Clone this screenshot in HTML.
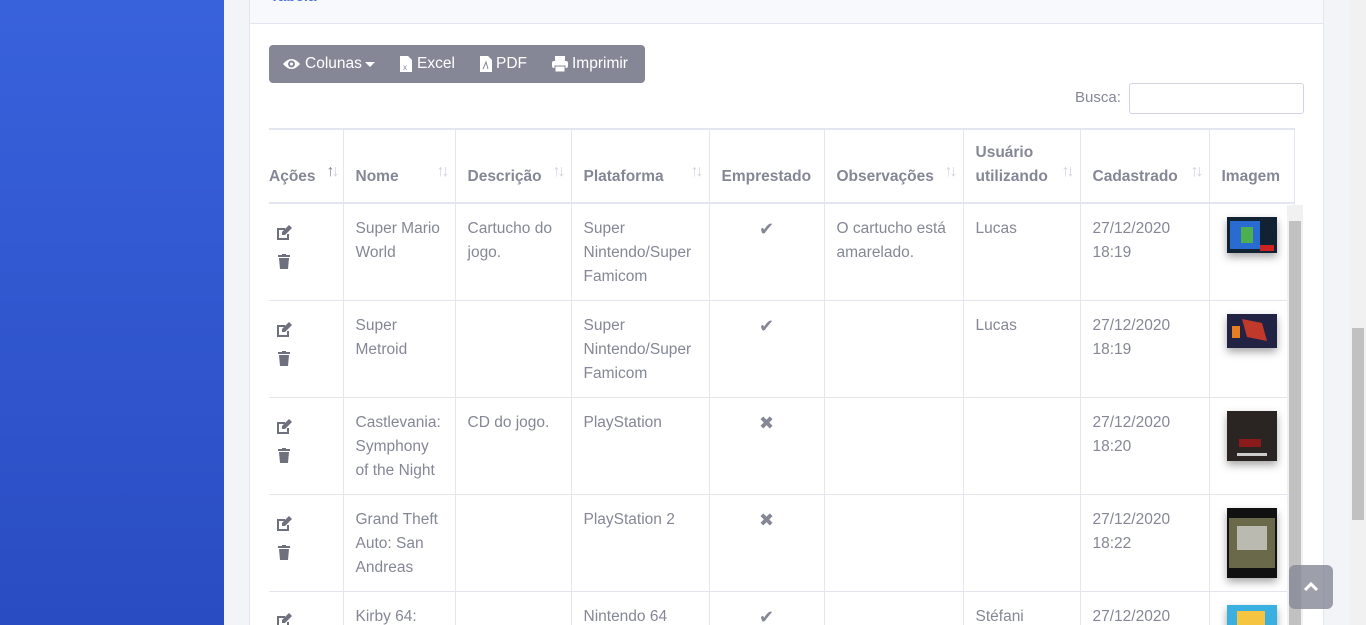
<!DOCTYPE html>
<html><head><meta charset="utf-8"><style>
*{box-sizing:border-box;margin:0;padding:0}
html,body{width:1366px;height:625px;overflow:hidden}
body{background:#f3f4f8;font-family:"Liberation Sans",sans-serif;color:#858796;position:relative}
.side{position:absolute;left:0;top:0;width:224px;height:625px;background:linear-gradient(180deg,#3862dc,#2a4cc2)}
.card{position:absolute;left:249px;top:-10px;width:1075px;height:635px;background:#fff;border-left:1px solid #e3e6f0;border-right:1px solid #e3e6f0}
.chead{position:absolute;left:0;top:0;width:100%;height:34px;background:#f8f9fc;border-bottom:1px solid #e3e6f0}
.chead span{position:absolute;left:20px;top:-2px;color:#4e73df;font-weight:bold;font-size:15px}
.btns{position:absolute;left:269px;top:45px;width:376px;height:38px;background:#858796;border-radius:4px;color:#fff;font-size:15.5px}
.btns span{position:absolute;top:10px}
.busca{position:absolute;left:1075px;top:89px;font-size:15px}
.inp{position:absolute;left:1129px;top:83px;width:175px;height:31px;border:1px solid #d1d3e2;border-radius:3px;background:#fff}
.wrap{position:absolute;left:269px;top:128px;width:1040px;height:497px;overflow:hidden}
table{border-collapse:collapse;table-layout:fixed;font-size:15.5px}
th,td{border:1px solid #e3e6f0;text-align:left}
th{height:74px;vertical-align:bottom;padding:0 12px 13px;font-weight:bold;line-height:24px;border-top:2px solid #e3e6f0;border-bottom:2px solid #e3e6f0;position:relative}
th .s{position:absolute;right:8px;bottom:18px;font-size:16px;color:#d1d3e2;letter-spacing:-3px;font-weight:normal}
td{height:97px;vertical-align:top;padding:13px 12px 11px;line-height:24px}
tr td:first-child,tr th:first-child{border-left:none;padding-left:0}
tr td.ic{padding-left:8px;padding-top:21px}
.c{text-align:center;color:#858796;font-size:18px}
.img{display:block;margin:0 auto;width:50px;box-shadow:0 4px 8px rgba(0,0,0,.35)}
.sb{position:absolute;left:1287px;top:205px;width:16px;height:420px;background:#f1f1f1}
.sb i{position:absolute;left:2px;top:16px;width:12px;height:410px;background:#c1c1c1}
.psb{position:absolute;left:1350px;top:0;width:16px;height:625px;background:#f1f1f1}
.psb i{position:absolute;left:2px;top:328px;width:12px;height:192px;background:#c1c1c1}
.top{position:absolute;left:1289px;top:565px;width:44px;height:44px;background:rgba(133,135,150,.8);border-radius:6px}
</style></head><body>
<div class="side"></div>
<div class="card"><div class="chead"><span>Tabela</span></div></div>
<div class="btns">
<svg style="position:absolute;left:13px;top:12px" width="19" height="14"><path d="M1 7Q9.5-3 18 7Q9.5 17 1 7z" fill="#fff"/><circle cx="9.5" cy="7" r="3.5" fill="#858796"/><circle cx="9.5" cy="7" r="1.5" fill="#fff"/></svg>
<span style="left:36px">Colunas</span>
<svg style="position:absolute;left:96px;top:17px" width="10" height="5"><path d="M0 0h10L5 5z" fill="#fff"/></svg>
<svg style="position:absolute;left:131px;top:11px" width="12" height="16"><path d="M0 0h8l4 4v12H0z" fill="#fff"/><text x="3" y="14" font-size="8" fill="#858796" font-family="Liberation Sans">x</text></svg>
<span style="left:148px">Excel</span>
<svg style="position:absolute;left:211px;top:11px" width="12" height="16"><path d="M0 0h8l4 4v12H0z" fill="#fff"/><path d="M3 13l3-7 2 7" stroke="#858796" fill="none"/></svg>
<span style="left:227px">PDF</span>
<svg style="position:absolute;left:283px;top:11px" width="16" height="16"><rect x="3" y="0" width="10" height="5" fill="#fff"/><rect x="0" y="5" width="16" height="7" rx="2" fill="#fff"/><rect x="3" y="10" width="10" height="6" fill="#fff" stroke="#858796"/></svg>
<span style="left:303px">Imprimir</span>
</div>
<div class="busca">Busca:</div><div class="inp"></div>
<div class="wrap">
<table>
<colgroup><col style="width:74px"><col style="width:112px"><col style="width:116px"><col style="width:138px"><col style="width:115px"><col style="width:139px"><col style="width:117px"><col style="width:129px"><col style="width:85px"></colgroup>
<tr><th>Ações<span class="s" style="color:#858796;right:6px">↑<span style="color:#d1d3e2">↓</span></span></th><th>Nome<span class="s">↑↓</span></th><th>Descrição<span class="s">↑↓</span></th><th>Plataforma<span class="s">↑↓</span></th><th>Emprestado</th><th>Observações<span class="s">↑↓</span></th><th>Usuário utilizando<span class="s">↑↓</span></th><th>Cadastrado<span class="s">↑↓</span></th><th>Imagem</th></tr>
<tr><td class="ic"><svg width="16" height="50" fill="#6e707e"><path d="M0 3h8v2H2v8h8V9h2v6H0z"/><path d="M12 0l3 3-7 7H5V7z"/><rect x="1" y="30" width="12" height="2"/><rect x="5" y="29" width="4" height="2"/><path d="M2 33h10l-1 11H3z"/></svg></td><td>Super Mario World</td><td>Cartucho do jogo.</td><td>Super Nintendo/Super Famicom</td><td class="c">✔</td><td>O cartucho está amarelado.</td><td>Lucas</td><td>27/12/2020 18:19</td><td><svg class="img" height="36" width="50"><rect width="50" height="36" fill="#123"/><rect x="3" y="4" width="30" height="28" fill="#2a6bd1"/><rect x="14" y="10" width="12" height="16" fill="#4caf50"/><rect x="33" y="28" width="14" height="6" fill="#c22"/></svg></td></tr>
<tr><td class="ic"><svg width="16" height="50" fill="#6e707e"><path d="M0 3h8v2H2v8h8V9h2v6H0z"/><path d="M12 0l3 3-7 7H5V7z"/><rect x="1" y="30" width="12" height="2"/><rect x="5" y="29" width="4" height="2"/><path d="M2 33h10l-1 11H3z"/></svg></td><td>Super Metroid</td><td></td><td>Super Nintendo/Super Famicom</td><td class="c">✔</td><td></td><td>Lucas</td><td>27/12/2020 18:19</td><td><svg class="img" height="34" width="50"><rect width="50" height="34" fill="#224"/><path d="M15 5l20 4 5 18-20-4z" fill="#c0392b"/><rect x="5" y="12" width="8" height="12" fill="#e67e22"/></svg></td></tr>
<tr><td class="ic"><svg width="16" height="50" fill="#6e707e"><path d="M0 3h8v2H2v8h8V9h2v6H0z"/><path d="M12 0l3 3-7 7H5V7z"/><rect x="1" y="30" width="12" height="2"/><rect x="5" y="29" width="4" height="2"/><path d="M2 33h10l-1 11H3z"/></svg></td><td>Castlevania: Symphony of the Night</td><td>CD do jogo.</td><td>PlayStation</td><td class="c">✖</td><td></td><td></td><td>27/12/2020 18:20</td><td><svg class="img" height="50" width="50"><rect width="50" height="50" fill="#2a2522"/><rect x="12" y="28" width="22" height="8" fill="#8b1a1a"/><rect x="10" y="42" width="30" height="3" fill="#ccc"/></svg></td></tr>
<tr><td class="ic"><svg width="16" height="50" fill="#6e707e"><path d="M0 3h8v2H2v8h8V9h2v6H0z"/><path d="M12 0l3 3-7 7H5V7z"/><rect x="1" y="30" width="12" height="2"/><rect x="5" y="29" width="4" height="2"/><path d="M2 33h10l-1 11H3z"/></svg></td><td>Grand Theft Auto: San Andreas</td><td></td><td>PlayStation 2</td><td class="c">✖</td><td></td><td></td><td>27/12/2020 18:22</td><td><svg class="img" height="70" width="50"><rect width="50" height="70" fill="#111"/><rect x="2" y="10" width="46" height="50" fill="#6a6a4a"/><rect x="10" y="18" width="30" height="24" fill="#ddd" opacity=".7"/></svg></td></tr>
<tr><td class="ic"><svg width="16" height="50" fill="#6e707e"><path d="M0 3h8v2H2v8h8V9h2v6H0z"/><path d="M12 0l3 3-7 7H5V7z"/></svg></td><td>Kirby 64:</td><td></td><td>Nintendo 64</td><td class="c">✔</td><td></td><td>Stéfani</td><td>27/12/2020</td><td><svg class="img" height="30" width="50"><rect width="50" height="30" fill="#3ab0e0"/><rect x="10" y="6" width="28" height="18" fill="#f5c542"/></svg></td></tr>
</table>
</div>
<div class="sb"><i></i></div>
<div class="psb"><i></i></div>
<div class="top"><svg style="position:absolute;left:15px;top:17px" width="14" height="9"><path d="M1 8l6-6 6 6" stroke="#fff" stroke-width="3" fill="none"/></svg></div>
</body></html>
